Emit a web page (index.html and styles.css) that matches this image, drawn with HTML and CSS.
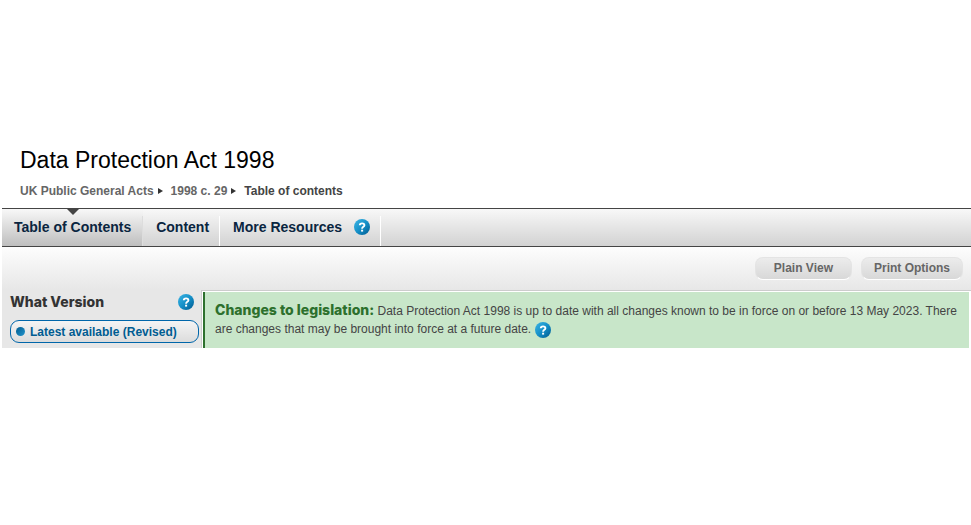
FILE: index.html
```
<!DOCTYPE html>
<html lang="en">
<head>
<meta charset="UTF-8">
<title>Data Protection Act 1998</title>
<link rel="stylesheet" href="styles.css">
</head>
<body>
    <svg width="0" height="0" class="defs" aria-hidden="true">
        <defs>
            <linearGradient id="blue" x1="0" y1="0" x2="1" y2="1">
                <stop offset="0" stop-color="#3db5e4"/>
                <stop offset="0.5" stop-color="#1590c8"/>
                <stop offset="1" stop-color="#00598f"/>
            </linearGradient>
            <symbol id="help" viewBox="0 0 16 16">
                <circle cx="8" cy="8" r="8" fill="url(#blue)"/>
                <path d="M5.8 6.3C5.8 3.7 10.4 3.8 10.4 6.2C10.4 7.9 8.1 7.8 8.1 9.7" fill="none" stroke="#fff" stroke-width="1.9"/>
                <rect x="7.1" y="10.7" width="2" height="1.9" fill="#fff"/>
            </symbol>
        </defs>
    </svg>

    <header class="title">
        <h1>Data Protection Act 1998</h1>
        <nav class="breadcrumb">
            <a href="#">UK Public General Acts</a>
            <a href="#">1998 c. 29</a>
            <span>Table of contents</span>
        </nav>
    </header>

    <nav class="tabs">
        <a href="#" class="tab active">Table of Contents</a>
        <a href="#" class="tab">Content</a>
        <div class="tab resources">
            <a href="#">More Resources</a>
            <a href="#" class="help" aria-label="Help"><svg><use href="#help"/></svg></a>
        </div>
    </nav>

    <div class="toolbar">
        <button type="button">Plain View</button>
        <button type="button">Print Options</button>
    </div>

    <div class="main">
        <aside class="version">
            <div class="version-title">
                <h2>What Version</h2>
                <a href="#" class="help" aria-label="Help"><svg><use href="#help"/></svg></a>
            </div>
            <a href="#" class="latest"><i class="dot"></i>Latest available (Revised)</a>
        </aside>
        <div class="content">
            <p class="changes"><strong>Changes to legislation:</strong> Data Protection Act 1998 is up to date with all changes known to be in force on or before 13 May 2023. There are changes that may be brought into force at a future date. <a href="#" class="help" aria-label="Help"><svg><use href="#help"/></svg></a></p>
        </div>
    </div>
</body>
</html>
```
FILE: styles.css
```
body {
    margin: 0 0 0 2px;
    padding-top: 146px;
    background: #fff;
    color: #444;
    font: 12px/18px "Liberation Sans", Arial, sans-serif;
}

a {
    color: inherit;
    text-decoration: none;
}

h1, h2, p {
    margin: 0;
}

.defs {
    position: absolute;
}

.title {
    padding: 0 18px 8px;
}

.title h1 {
    color: #000;
    font-size: 23px;
    font-weight: normal;
    line-height: 28px;
}

.breadcrumb {
    display: flex;
    padding-top: 8px;
    line-height: 18px;
    font-weight: bold;
}

.breadcrumb a {
    display: flex;
    align-items: center;
    color: #666;
}

.breadcrumb a::after {
    content: "";
    margin: 0 8px 0 4px;
    border-left: 5px solid #333;
    border-top: 3px solid transparent;
    border-bottom: 3px solid transparent;
}

/* tabs */
.tabs {
    display: flex;
    height: 37px;
    border-top: 1px solid #444;
    border-bottom: 1px solid #444;
    background: linear-gradient(#f8f8f8, #d2d2d2);
    color: #0a2540;
    font-size: 14px;
    font-weight: bold;
}

.tab {
    position: relative;
    display: flex;
    align-items: center;
    padding: 0 11px 1px 13px;
}

.tab::after {
    content: "";
    position: absolute;
    right: 0;
    top: 7px;
    bottom: 0;
    width: 1px;
    background: #fff;
}

.tab.active {
    padding: 0 12px 1px;
    background: linear-gradient(#f8f8f8, #bebebe);
}

.tab.active::after {
    background: #ddd;
}

.tab.active::before {
    content: "";
    position: absolute;
    left: 50%;
    top: 0;
    margin-left: -6px;
    border-top: 6px solid #444;
    border-left: 6px solid transparent;
    border-right: 6px solid transparent;
}

.resources {
    gap: 12px;
}

.help, .help svg {
    display: block;
    width: 16px;
    height: 16px;
}

/* view buttons */
.toolbar {
    display: flex;
    justify-content: flex-end;
    gap: 9px;
    height: 23px;
    padding: 10px 8px;
    background: linear-gradient(#fdfdfd, #e7e7e7);
}

.toolbar button {
    height: 23px;
    padding: 0 12px 2px;
    border: 1px solid #e4e4e4;
    border-bottom-color: #fff;
    border-radius: 8px;
    background: linear-gradient(#ececec, #d8d8d8);
    color: #666;
    font: bold 12px "Liberation Sans", Arial, sans-serif;
}

.toolbar button:first-child {
    padding: 0 18px 2px;
}

/* columns */
.main {
    display: flex;
    background: #e7e7e7;
}

.version {
    flex: none;
    width: 189px;
    padding: 0 2px 5px 8px;
}

.version-title {
    display: flex;
    align-items: center;
    justify-content: space-between;
    padding: 3px 5px 9px 0;
}

.version h2 {
    color: #333;
    font: 800 14px/18px Inter, "Liberation Sans", sans-serif;
}

.latest {
    display: flex;
    align-items: center;
    gap: 5px;
    height: 21px;
    padding: 0 5px;
    border: 1px solid #06a;
    border-radius: 9px;
    background: linear-gradient(#f4f4f4, #dcdcdc);
    color: #005c92;
    font-weight: bold;
}

.dot {
    width: 9px;
    height: 9px;
    border-radius: 50%;
    background: linear-gradient(135deg, #005b8f, #2395cd);
}

.content {
    flex: 1;
    padding: 1px 2px 0 1px;
    border-top: 1px solid #ccc;
    border-left: 1px solid #ccc;
    background: #fff;
}

.changes {
    height: 100%;
    box-sizing: border-box;
    padding: 9px 10px;
    border-left: 2px solid #2d702d;
    background: #c8e6c9;
}

.changes strong {
    color: #2d702d;
    font: 800 14px/18px Inter, "Liberation Sans", sans-serif;
}

.changes .help {
    display: inline-block;
    vertical-align: middle;
}
```
